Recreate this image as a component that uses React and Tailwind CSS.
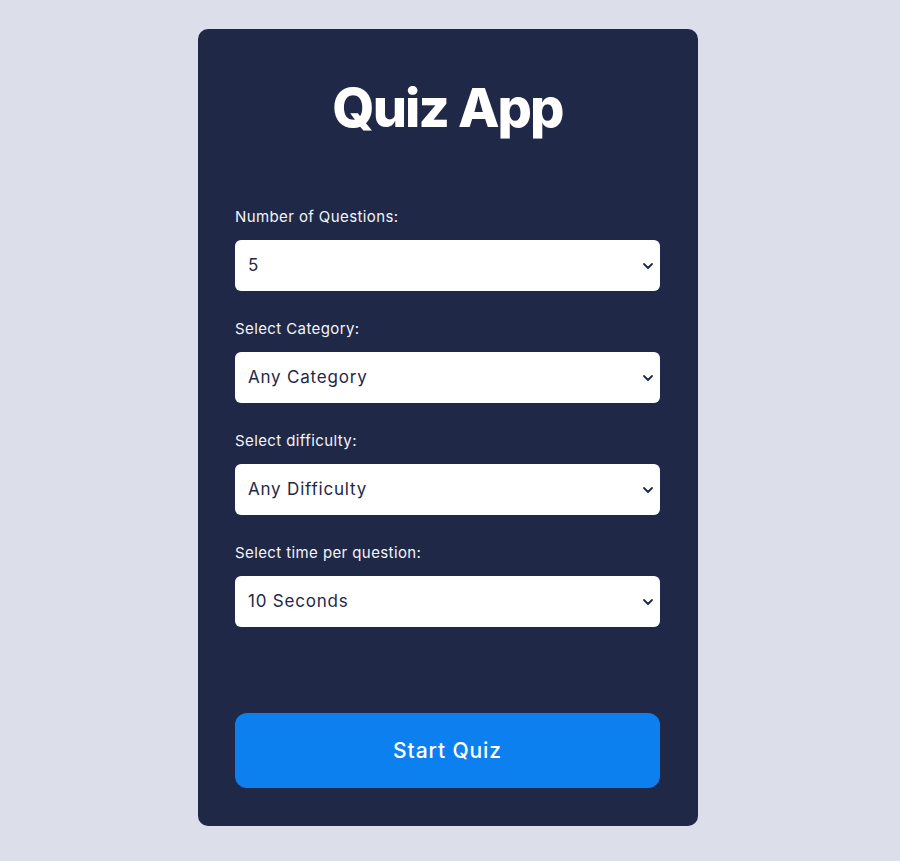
import React, { useState } from 'react';

const Chevron = () => (
    <svg className="pointer-events-none absolute right-[6px] top-1/2 -translate-y-1/2" width="12" height="8" viewBox="0 0 12 8" fill="none">
        <path d="M2 2l4 4 4-4" stroke="#1f2847" strokeWidth="1.8" strokeLinecap="round" strokeLinejoin="round" />
    </svg>
);

const Field = ({ label, value, options, onChange }) => (
    <div className="flex flex-col">
        <label className="text-[15px] leading-[20px] tracking-[0.4px] text-[#f3f4f8] mb-[13px]">{label}</label>
        <div className="relative">
            <select
                value={value}
                onChange={(e) => onChange(e.target.value)}
                className="w-full h-[51px] appearance-none rounded-[6px] bg-white pl-[13px] pr-8 text-[17px] tracking-[0.8px] text-[#1f2847] outline-none"
            >
                {options.map(o => <option key={o}>{o}</option>)}
            </select>
            <Chevron />
        </div>
    </div>
);

const App = () => {
    const [amount, setAmount] = useState('5');
    const [category, setCategory] = useState('Any Category');
    const [difficulty, setDifficulty] = useState('Any Difficulty');
    const [time, setTime] = useState('10 Seconds');

    return (
        <div className="min-h-screen bg-[#dcdee9] flex justify-center pt-[29px] pb-[35px] pr-[4px]" style={{ fontFamily: 'Inter, "Noto Sans", sans-serif' }}>
            <div className="w-[500px] h-[797px] bg-[#1f2847] rounded-[10px] pl-[37px] pr-[38px] pt-[48px] pb-[38px] flex flex-col">
                <h1 className="text-center text-white font-extrabold text-[54px] leading-[62px] tracking-[-0.035em]">Quiz App</h1>

                <div className="mt-[68px] flex flex-col gap-[28px]">
                    <Field label="Number of Questions:" value={amount} onChange={setAmount} options={['5', '10', '15', '20']} />
                    <Field label="Select Category:" value={category} onChange={setCategory} options={['Any Category', 'General Knowledge', 'Science', 'History']} />
                    <Field label="Select difficulty:" value={difficulty} onChange={setDifficulty} options={['Any Difficulty', 'Easy', 'Medium', 'Hard']} />
                    <Field label="Select time per question:" value={time} onChange={setTime} options={['10 Seconds', '15 Seconds', '20 Seconds', '30 Seconds']} />
                </div>

                <button className="mt-auto h-[75px] w-full rounded-[12px] bg-[#0c80ef] text-white text-[21px] tracking-[0.9px] font-medium">Start Quiz</button>
            </div>
        </div>
    );
};

export default App;
